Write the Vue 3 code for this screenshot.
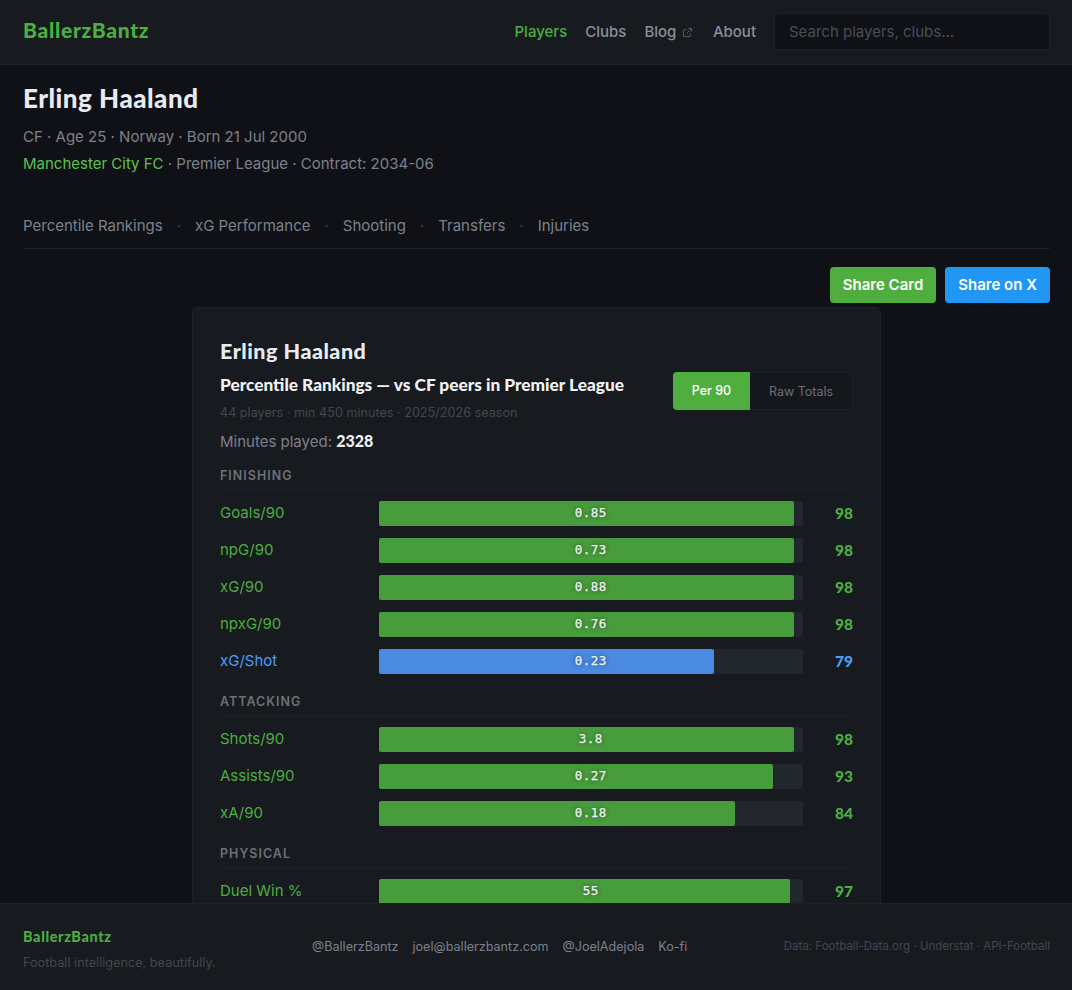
<template>
  <div class="page">
    <header class="topbar">
      <div class="logo">BallerzBantz</div>
      <nav class="nav">
        <a class="active">Players</a>
        <a>Clubs</a>
        <a class="blog">Blog
          <svg class="ext" viewBox="0 0 24 24" fill="none" stroke="currentColor" stroke-width="2">
            <path d="M18 14v6a1 1 0 0 1-1 1H4a1 1 0 0 1-1-1V7a1 1 0 0 1 1-1h6" />
            <path d="M14 3h7v7" />
            <path d="M21 3 10 14" />
          </svg>
        </a>
        <a>About</a>
        <input class="search" placeholder="Search players, clubs..." />
      </nav>
    </header>

    <main class="main">
      <h1 class="name">Erling Haaland</h1>
      <p class="meta">CF · Age 25 · Norway · Born 21 Jul 2000</p>
      <p class="meta"><span class="club">Manchester City FC</span> · Premier League · Contract: 2034-06</p>

      <div class="tabs">
        <template v-for="(t, i) in tabs" :key="t">
          <span v-if="i > 0" class="dot">·</span>
          <a>{{ t }}</a>
        </template>
      </div>

      <div class="actions">
        <button class="btn green">Share Card</button>
        <button class="btn blue">Share on X</button>
      </div>

      <section class="card">
        <h2 class="card-name">Erling Haaland</h2>
        <div class="card-head">
          <div>
            <h3 class="card-title">Percentile Rankings — vs CF peers in Premier League</h3>
            <p class="card-sub">44 players · min 450 minutes · 2025/2026 season</p>
          </div>
          <div class="toggle">
            <span class="on">Per 90</span>
            <span class="off">Raw Totals</span>
          </div>
        </div>
        <p class="minutes">Minutes played: <b>2328</b></p>

        <div v-for="g in groups" :key="g.title" class="group">
          <div class="group-title">{{ g.title }}</div>
          <div v-for="r in g.rows" :key="r.label" class="row" :class="r.color">
            <span class="label">{{ r.label }}</span>
            <div class="track">
              <div class="fill" :style="{ width: r.pct + '%' }"></div>
              <span class="val">{{ r.val }}</span>
            </div>
            <span class="pct">{{ r.pct }}</span>
          </div>
        </div>
      </section>
    </main>

    <footer class="footer">
      <div class="foot-brand">
        <div class="foot-logo">BallerzBantz</div>
        <div class="tagline">Football intelligence, beautifully.</div>
      </div>
      <div class="foot-links">
        <a>@BallerzBantz</a>
        <a>joel@ballerzbantz.com</a>
        <a>@JoelAdejola</a>
        <a>Ko-fi</a>
      </div>
      <div class="foot-data">Data: Football-Data.org · Understat · API-Football</div>
    </footer>
  </div>
</template>

<script setup>
const tabs = ["Percentile Rankings", "xG Performance", "Shooting", "Transfers", "Injuries"];

const groups = [
  {
    title: "FINISHING",
    rows: [
      { label: "Goals/90", val: "0.85", pct: 98, color: "g" },
      { label: "npG/90", val: "0.73", pct: 98, color: "g" },
      { label: "xG/90", val: "0.88", pct: 98, color: "g" },
      { label: "npxG/90", val: "0.76", pct: 98, color: "g" },
      { label: "xG/Shot", val: "0.23", pct: 79, color: "b" },
    ],
  },
  {
    title: "ATTACKING",
    rows: [
      { label: "Shots/90", val: "3.8", pct: 98, color: "g" },
      { label: "Assists/90", val: "0.27", pct: 93, color: "g" },
      { label: "xA/90", val: "0.18", pct: 84, color: "g" },
    ],
  },
  {
    title: "PHYSICAL",
    rows: [
      { label: "Duel Win %", val: "55", pct: 97, color: "g" },
    ],
  },
];
</script>

<style>
html, body {
  margin: 0;
  background: #0f1116;
  overflow: hidden;
}
</style>

<style scoped>
.page {
  height: 100vh;
  display: flex;
  flex-direction: column;
  font-family: Inter, "Liberation Sans", sans-serif;
  color: #8b8f99;
}

.topbar {
  height: 62px;
  flex: none;
  background: #171a1f;
  border-bottom: 1px solid #1e2228;
  display: flex;
  align-items: center;
  justify-content: space-between;
  padding: 0 22px 2px 23px;
}
.logo {
  font-family: Lato, sans-serif;
  font-weight: 900;
  font-size: 21px;
  letter-spacing: 0.7px;
  color: #4caf40;
  margin-top: -4px;
}
.nav {
  display: flex;
  align-items: center;
  gap: 18px;
  font-size: 15px;
  font-weight: 500;
}
.nav a { color: #8b8f99; }
.nav a.active { color: #4caf40; }
.blog { display: flex; align-items: center; gap: 6px; }
.ext { width: 11px; height: 11px; color: #5c616b; margin: 2px 1.5px 0 0; }
.search {
  width: 276px;
  height: 37px;
  box-sizing: border-box;
  padding: 0 14px;
  background: #0f1116;
  border: 1px solid #1e2228;
  border-radius: 4px;
  font-family: inherit;
  font-size: 15px;
  color: #8b8f99;
  outline: none;
}
.search::placeholder { color: #4a4e57; }

.main {
  flex: 1;
  min-height: 0;
  overflow: hidden;
  padding: 0 22px 0 23px;
}
.name {
  margin: 17px 0 0;
  font-family: Lato, sans-serif;
  font-weight: 900;
  font-size: 26px;
  letter-spacing: 0.5px;
  line-height: 32px;
  color: #e8ecf2;
}
.meta {
  margin: 0;
  font-size: 15px;
  line-height: 27px;
  color: #7d818b;
}
.meta:first-of-type { margin-top: 9px; }
.club { color: #5cc24e; }

.tabs {
  margin-top: 39px;
  height: 32px;
  border-bottom: 1px solid #1e2228;
  display: flex;
  align-items: flex-start;
  gap: 14px;
  font-size: 15px;
  line-height: 20px;
  color: #7d818b;
}
.tabs .dot { color: #3a3e46; }

.actions {
  display: flex;
  justify-content: flex-end;
  gap: 9px;
  margin-top: 18px;
}
.btn {
  height: 36px;
  padding: 0 13px 2px;
  border: none;
  border-radius: 4px;
  color: #fff;
  font-family: inherit;
  font-size: 15px;
  font-weight: 600;
}
.btn.green { background: #4fae3e; }
.btn.blue { background: #2196f3; }

.card {
  width: 689px;
  box-sizing: border-box;
  margin: 4px 0 0 169px;
  padding: 28px 27px;
  background: #171a1f;
  border: 1px solid #1e2228;
  border-radius: 6px;
}
.card-name {
  margin: 0;
  font-family: Lato, sans-serif;
  font-weight: 900;
  font-size: 21.5px;
  letter-spacing: 0.5px;
  line-height: 30px;
  color: #e8ecf2;
}
.card-head {
  display: flex;
  justify-content: space-between;
  align-items: flex-start;
  margin-top: 7px;
}
.card-title {
  margin: 0;
  font-family: Lato, sans-serif;
  font-weight: 900;
  font-size: 17.25px;
  line-height: 24px;
  color: #f0f2f5;
}
.card-sub {
  margin: 7px 0 0;
  font-size: 12.64px;
  line-height: 18px;
  color: #43474f;
}
.toggle {
  display: flex;
  height: 38px;
  margin-top: -1px;
  font-size: 12.5px;
  line-height: 38px;
}
.toggle .on {
  width: 77px;
  text-align: center;
  background: #4fae3e;
  color: #fff;
  font-weight: 500;
  border-radius: 4px 0 0 4px;
}
.toggle .off {
  width: 103px;
  box-sizing: border-box;
  text-align: center;
  color: #6c7079;
  background: #14171c;
  border: 1px solid #1e2228;
  border-left: none;
  border-radius: 0 4px 4px 0;
}
.minutes {
  margin: 8px 0 0;
  font-size: 15px;
  line-height: 22px;
  color: #7d818b;
}
.minutes b {
  font-family: Lato, sans-serif;
  font-weight: 900;
  font-size: 16px;
  color: #f0f2f5;
}

.group { margin-top: 13px; }
.group + .group { margin-top: 18px; }
.group-title {
  font-size: 12.5px;
  font-weight: 600;
  letter-spacing: 1px;
  line-height: 20px;
  padding-bottom: 3px;
  margin-bottom: 11px;
  color: #6c7079;
  border-bottom: 1px solid #1e2228;
}
.row {
  display: flex;
  align-items: center;
  height: 25px;
  margin-bottom: 12px;
}
.label {
  width: 159px;
  flex: none;
  font-size: 15px;
  padding-bottom: 2px;
}
.track {
  position: relative;
  width: 423.5px;
  height: 25px;
  flex: none;
  display: flex;
  align-items: center;
  justify-content: center;
  padding-bottom: 2px;
  box-sizing: border-box;
  background: #22262d;
  border-radius: 2px;
}
.fill {
  position: absolute;
  left: 0;
  top: 0;
  bottom: 0;
  border-radius: 2px;
}
.val {
  position: relative;
  font-family: "DejaVu Sans Mono", "Liberation Mono", monospace;
  font-size: 12.5px;
  letter-spacing: 0.5px;
  color: #f0f2f5;
  -webkit-text-stroke: 0.25px #f0f2f5;
  text-shadow: 0 0 4px rgba(0, 0, 0, 0.6);
}
.pct {
  flex: 1;
  text-align: right;
  font-family: Lato, sans-serif;
  font-weight: 900;
  font-size: 15.5px;
  padding-bottom: 2px;
}
.row.g .label, .row.g .pct { color: #4caf40; }
.row.g .fill { background: #479c3c; }
.row.b .label, .row.b .pct { color: #4a9eff; }
.row.b .fill { background: #4a8ae0; }

.footer {
  position: relative;
  flex: none;
  height: 84px;
  background: #171a1f;
  border-top: 1px solid #1e2228;
  display: flex;
  align-items: center;
  justify-content: space-between;
  padding: 0 22px 2px 23px;
}
.foot-brand { margin-top: 8px; }
.foot-logo {
  font-family: Lato, sans-serif;
  font-weight: 900;
  font-size: 14.5px;
  letter-spacing: 0.6px;
  line-height: 20px;
  color: #4caf40;
}
.tagline {
  margin-top: 6px;
  font-size: 12.7px;
  line-height: 20px;
  color: #43474f;
}
.foot-links {
  display: flex;
  gap: 14px;
  font-size: 12.6px;
  color: #7d818b;
}
.foot-data {
  font-size: 11.5px;
  color: #43474f;
}
</style>
